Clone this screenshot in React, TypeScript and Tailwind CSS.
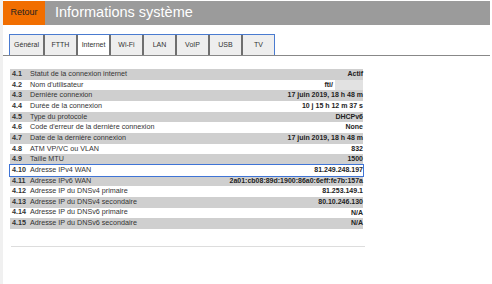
const tabs = ["Général", "FTTH", "Internet", "Wi-Fi", "LAN", "VoIP", "USB", "TV"];

const rows: [string, string, string][] = [
  ["4.1", "Statut de la connexion internet", "Actif"],
  ["4.2", "Nom d'utilisateur", "fti/"],
  ["4.3", "Dernière connexion", "17 juin 2019, 18 h 48 m"],
  ["4.4", "Durée de la connexion", "10 j 15 h 12 m 37 s"],
  ["4.5", "Type du protocole", "DHCPv6"],
  ["4.6", "Code d'erreur de la dernière connexion", "None"],
  ["4.7", "Date de la dernière connexion", "17 juin 2019, 18 h 48 m"],
  ["4.8", "ATM VP/VC ou VLAN", "832"],
  ["4.9", "Taille MTU", "1500"],
  ["4.10", "Adresse IPv4 WAN", "81.249.248.197"],
  ["4.11", "Adresse IPv6 WAN", "2a01:cb08:89d:1900:86a0:6eff:fe7b:157a"],
  ["4.12", "Adresse IP du DNSv4 primaire", "81.253.149.1"],
  ["4.13", "Adresse IP du DNSv4 secondaire", "80.10.246.130"],
  ["4.14", "Adresse IP du DNSv6 primaire", "N/A"],
  ["4.15", "Adresse IP du DNSv6 secondaire", "N/A"],
];

export default function App() {
  return (
    <div className="flex h-[284px] w-[492px] overflow-hidden bg-white font-['Liberation_Sans',Arial,sans-serif] text-[#333]">
      <div className="w-[3px] shrink-0 bg-[#f0f0f0]" />
      <div className="flex-1 pr-[2px]">
        <header className="mt-px flex h-[24px]">
          <div className="flex w-[42px] items-center justify-center bg-[#f16e00] text-[9px] text-[#222]">
            Retour
          </div>
          <div className="flex flex-1 items-center bg-[#9b9b9b] pl-[10px] text-[14.5px] text-white">
            Informations système
          </div>
        </header>

        <nav className="mt-[9px] flex h-[22px] border-b border-[#888] pl-[6px]">
          <div className="flex border border-b-0 border-[#4a7bd0]">
            {tabs.map((t, i) => (
              <div
                key={t}
                className={`flex w-[33px] items-center justify-center text-[7px] text-[#333] ${
                  i > 0 ? "border-l-2 border-[#6f6f6f]" : ""
                } ${t === "Internet" ? "bg-white" : "bg-[#eeeeee]"}`}
              >
                {t}
              </div>
            ))}
          </div>
        </nav>

        <div className="ml-[7px] mt-[13px] w-[353px]">
          {rows.map(([n, label, value], i) => (
            <div
              key={n}
              className={`flex h-[10.67px] items-center ${i % 2 === 0 ? "bg-[#cfcfcf]" : "bg-white"} ${
                n === "4.10" ? "outline outline-1 outline-[#3f74d6]" : ""
              }`}
            >
              <span className="w-[20px] pl-[2px] text-[7.2px] font-bold text-[#333]">{n}</span>
              <span className="flex-1 text-[7.2px] text-[#333]">{label}</span>
              <span className="flex h-full items-center text-right text-[7px] font-bold text-[#222]">
                {value}
                {n === "4.2" && <span className="ml-[2px] h-full w-[28px] bg-[#e2e2e2]" />}
              </span>
            </div>
          ))}
        </div>

        <div className="ml-[8px] mt-[17px] h-px w-[354px] bg-[#dddddd]" />
      </div>
    </div>
  );
}
